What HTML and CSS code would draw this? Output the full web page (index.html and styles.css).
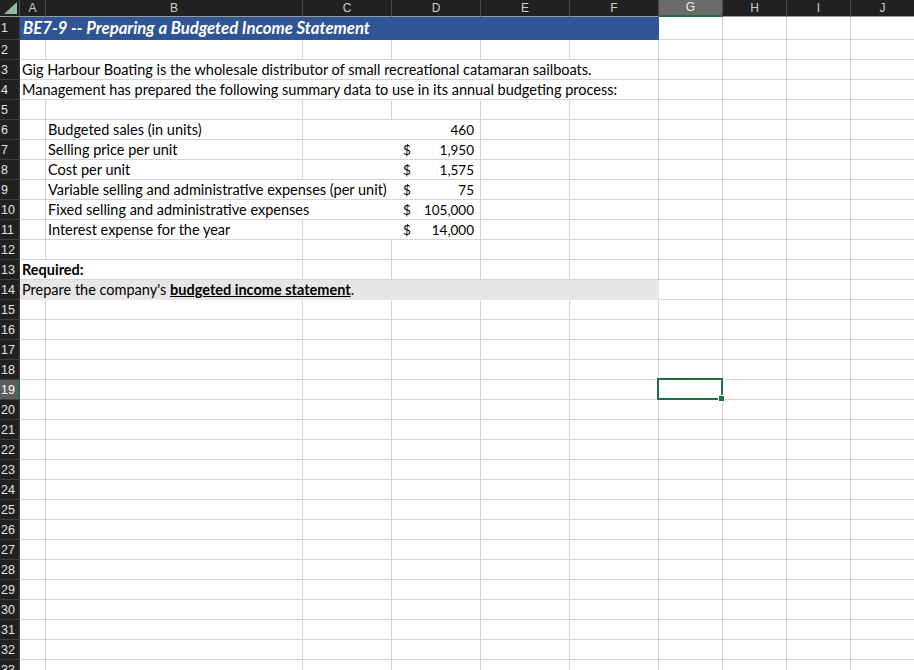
FILE: index.html
```html
<!DOCTYPE html>
<html>
<head>
<meta charset="utf-8">
<link rel="stylesheet" href="styles.css">
</head>
<body>
<div class="sheet">
<table class="grid">
<colgroup>
<col class="w-rh"><col class="w-a"><col class="w-b"><col class="w-cf"><col class="w-cf"><col class="w-cf"><col class="w-cf"><col class="w-gj"><col class="w-gj"><col class="w-gj"><col class="w-gj">
</colgroup>
<thead>
<tr class="hdr">
<th class="corner"><span class="tri"></span></th>
<th>A</th><th>B</th><th>C</th><th>D</th><th>E</th><th>F</th><th class="sel-col">G</th><th>H</th><th>I</th><th>J</th>
</tr>
</thead>
<tbody>
<tr class="r1"><th>1</th><td colspan="6" class="title">BE7-9 -- Preparing a Budgeted Income Statement</td><td></td><td></td><td></td><td></td></tr>
<tr><th>2</th><td></td><td></td><td></td><td></td><td></td><td></td><td></td><td></td><td></td><td></td></tr>
<tr><th>3</th><td colspan="6">Gig Harbour Boating is the wholesale distributor of small recreational catamaran sailboats.</td><td></td><td></td><td></td><td></td></tr>
<tr><th>4</th><td colspan="6">Management has prepared the following summary data to use in its annual budgeting process:</td><td></td><td></td><td></td><td></td></tr>
<tr><th>5</th><td></td><td></td><td></td><td></td><td></td><td></td><td></td><td></td><td></td><td></td></tr>
<tr><th>6</th><td></td><td>Budgeted sales (in units)</td><td class="nr"></td><td class="num"><span class="cur"></span><span>460</span></td><td></td><td></td><td></td><td></td><td></td><td></td></tr>
<tr><th>7</th><td></td><td>Selling price per unit</td><td class="nr"></td><td class="num"><span class="cur">$</span><span>1,950</span></td><td></td><td></td><td></td><td></td><td></td><td></td></tr>
<tr><th>8</th><td></td><td>Cost per unit</td><td class="nr"></td><td class="num"><span class="cur">$</span><span>1,575</span></td><td></td><td></td><td></td><td></td><td></td><td></td></tr>
<tr><th>9</th><td></td><td colspan="2" class="nr">Variable selling and administrative expenses (per unit)</td><td class="num"><span class="cur">$</span><span>75</span></td><td></td><td></td><td></td><td></td><td></td><td></td></tr>
<tr><th>10</th><td></td><td colspan="2" class="nr">Fixed selling and administrative expenses</td><td class="num"><span class="cur">$</span><span>105,000</span></td><td></td><td></td><td></td><td></td><td></td><td></td></tr>
<tr><th>11</th><td></td><td>Interest expense for the year</td><td class="nr"></td><td class="num"><span class="cur">$</span><span>14,000</span></td><td></td><td></td><td></td><td></td><td></td><td></td></tr>
<tr><th>12</th><td></td><td></td><td></td><td></td><td></td><td></td><td></td><td></td><td></td><td></td></tr>
<tr><th>13</th><td colspan="2" class="bold">Required:</td><td></td><td></td><td></td><td></td><td></td><td></td><td></td><td></td></tr>
<tr><th>14</th><td colspan="6" class="shade">Prepare the company's <b class="ul">budgeted income statement</b>.</td><td></td><td></td><td></td><td></td></tr>
<tr><th>15</th><td></td><td></td><td></td><td></td><td></td><td></td><td></td><td></td><td></td><td></td></tr>
<tr><th>16</th><td></td><td></td><td></td><td></td><td></td><td></td><td></td><td></td><td></td><td></td></tr>
<tr><th>17</th><td></td><td></td><td></td><td></td><td></td><td></td><td></td><td></td><td></td><td></td></tr>
<tr><th>18</th><td></td><td></td><td></td><td></td><td></td><td></td><td></td><td></td><td></td><td></td></tr>
<tr><th class="sel-row">19</th><td></td><td></td><td></td><td></td><td></td><td></td><td class="active"><span class="cursor"><span class="handle"></span></span></td><td></td><td></td><td></td></tr>
<tr><th>20</th><td></td><td></td><td></td><td></td><td></td><td></td><td></td><td></td><td></td><td></td></tr>
<tr><th>21</th><td></td><td></td><td></td><td></td><td></td><td></td><td></td><td></td><td></td><td></td></tr>
<tr><th>22</th><td></td><td></td><td></td><td></td><td></td><td></td><td></td><td></td><td></td><td></td></tr>
<tr><th>23</th><td></td><td></td><td></td><td></td><td></td><td></td><td></td><td></td><td></td><td></td></tr>
<tr><th>24</th><td></td><td></td><td></td><td></td><td></td><td></td><td></td><td></td><td></td><td></td></tr>
<tr><th>25</th><td></td><td></td><td></td><td></td><td></td><td></td><td></td><td></td><td></td><td></td></tr>
<tr><th>26</th><td></td><td></td><td></td><td></td><td></td><td></td><td></td><td></td><td></td><td></td></tr>
<tr><th>27</th><td></td><td></td><td></td><td></td><td></td><td></td><td></td><td></td><td></td><td></td></tr>
<tr><th>28</th><td></td><td></td><td></td><td></td><td></td><td></td><td></td><td></td><td></td><td></td></tr>
<tr><th>29</th><td></td><td></td><td></td><td></td><td></td><td></td><td></td><td></td><td></td><td></td></tr>
<tr><th>30</th><td></td><td></td><td></td><td></td><td></td><td></td><td></td><td></td><td></td><td></td></tr>
<tr><th>31</th><td></td><td></td><td></td><td></td><td></td><td></td><td></td><td></td><td></td><td></td></tr>
<tr><th>32</th><td></td><td></td><td></td><td></td><td></td><td></td><td></td><td></td><td></td><td></td></tr>
<tr><th>33</th><td></td><td></td><td></td><td></td><td></td><td></td><td></td><td></td><td></td><td></td></tr>
</tbody>
</table>
</div>
</body>
</html>
```
FILE: styles.css
```css
html, body {
  margin: 0;
  padding: 0;
  background: #ffffff;
  overflow: hidden;
}
.sheet {
  width: 914px;
  height: 670px;
  overflow: hidden;
}
.grid {
  border-collapse: separate;
  border-spacing: 0;
  table-layout: fixed;
  width: 915px;
  font-family: Lato, "Liberation Sans", sans-serif;
  font-size: 14.5px;
  color: #000;
}
.w-rh { width: 20px; }
.w-a { width: 26px; }
.w-b { width: 257px; }
.w-cf { width: 89px; }
.w-gj { width: 64px; }

.grid td, .grid th {
  box-sizing: border-box;
  height: 20px;
  padding: 0 0 0 2px;
  border-right: 1px solid #d4d4d4;
  border-bottom: 1px solid #d4d4d4;
  white-space: nowrap;
  overflow: hidden;
  text-align: left;
  font-weight: normal;
  line-height: 18px;
}
.grid .hdr th {
  height: 16px;
  background: #212121;
  color: #cfcfcf;
  font-family: "Liberation Sans", sans-serif;
  font-size: 12px;
  line-height: 15px;
  text-align: center;
  padding: 0;
  border-right: 1px solid #4a4a4a;
  border-bottom: 1px solid #9a9a9a;
}
.grid .hdr th.sel-col {
  background: #6a6a6a;
  color: #f0f0f0;
  border-bottom: 2px solid #1e7145;
}
.grid .hdr th.corner {
  position: relative;
}
.tri {
  position: absolute;
  right: 2px;
  bottom: 2px;
  width: 0;
  height: 0;
  border-left: 13px solid transparent;
  border-bottom: 12px solid #8fbc9f;
}
.grid tbody th {
  background: #212121;
  color: #e2e2e2;
  font-family: "Liberation Sans", sans-serif;
  font-size: 12.5px;
  padding: 0 0 0 1px;
  border-right: 1px solid #3a3a3a;
  border-bottom: 1px solid #3e3e3e;
}
.grid tbody th.sel-row {
  background: #5e5e5e;
  color: #ffffff;
  border-right: 2px solid #1e7145;
}
.grid .r1 th, .grid .r1 td {
  height: 23px;
}
.grid td.title {
  background: #2f5597;
  color: #ffffff;
  font-weight: bold;
  font-style: italic;
  font-size: 16.7px;
  line-height: 20px;
  border-right-color: #2f5597;
  border-bottom-color: #2f5597;
  padding-left: 3px;
}
.grid td.nr {
  border-right-color: transparent;
}
.grid td.num {
  padding: 0 6px 0 11px;
  font-size: 13.5px;
}
.num .cur {
  float: left;
}
.num span:last-child {
  float: right;
}
.grid td.bold {
  font-weight: bold;
}
.grid td.shade {
  background: #e6e6e6;
  border-right-color: #e6e6e6;
  border-bottom-color: #e6e6e6;
}
.ul {
  text-decoration: underline;
}
.grid td.active {
  position: relative;
  overflow: visible;
}
.cursor {
  position: absolute;
  left: -2px;
  top: -2px;
  right: -1px;
  bottom: -1px;
  border: 2px solid #1e7145;
}
.handle {
  position: absolute;
  right: -4px;
  bottom: -4px;
  width: 5px;
  height: 5px;
  background: #1e7145;
  border: 1px solid #ffffff;
}
```
